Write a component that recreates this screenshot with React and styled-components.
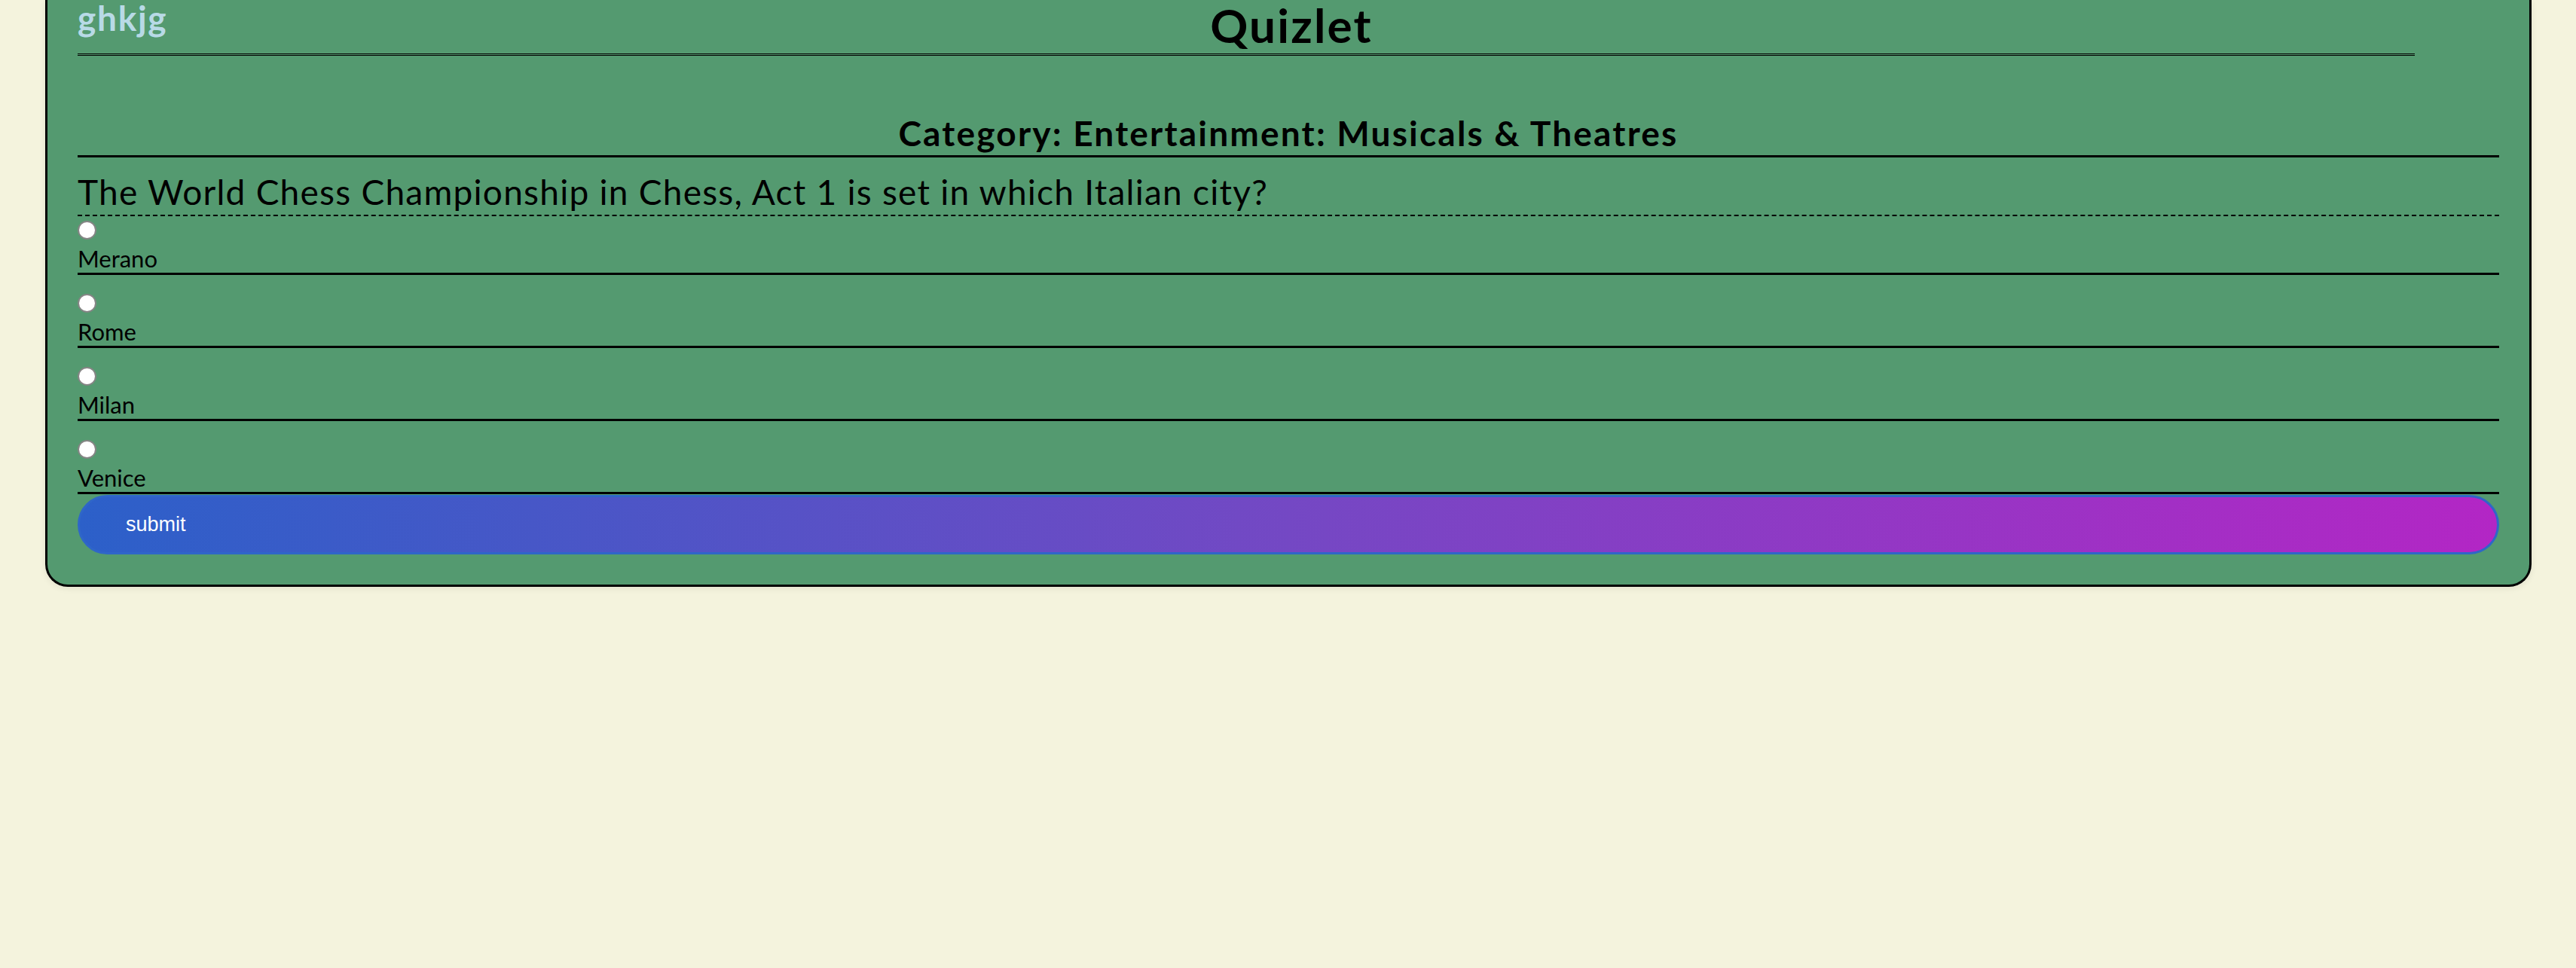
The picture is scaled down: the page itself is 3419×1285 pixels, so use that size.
import React from "react";
import styled, { createGlobalStyle } from "styled-components";

const GlobalStyle = createGlobalStyle`
  html, body {
    margin: 0;
    padding: 0;
    background: #f4f3dd;
  }
  body {
    font-family: Lato, "Open Sans", sans-serif;
    color: #000;
  }
  * { box-sizing: border-box; }
`;

const Page = styled.div`
  min-height: 1285px;
  background: #f4f3dd;
  padding: 0 59px 0 60px;
`;

const Card = styled.main`
  background: #549a70;
  border: 3px solid #000;
  border-top: none;
  border-radius: 0 0 30px 30px;
  padding: 0 40px 40px;
  box-shadow: 0 2px 8px rgba(0, 0, 0, 0.08);
  display: flex;
  flex-direction: column;
`;

const TopBar = styled.header`
  display: grid;
  grid-template-columns: 1fr auto 1fr;
  align-items: start;
`;

const Brand = styled.div`
  font-size: 46px;
  font-weight: 700;
  line-height: 48px;
  letter-spacing: 1.7px;
  color: #b8dae6;
`;

const Title = styled.h1`
  margin: 0;
  padding-left: 8px;
  font-size: 62px;
  font-weight: 700;
  line-height: 66px;
  letter-spacing: 2.2px;
  text-align: center;
`;

const DoubleRule = styled.div`
  margin: 5px 112px 0 0;
  border-top: 3px double #000;
`;

const Category = styled.h2`
  margin: 76px 0 0;
  font-size: 46px;
  font-weight: 700;
  line-height: 54px;
  letter-spacing: 2.2px;
  padding-bottom: 2px;
  text-align: center;
  border-bottom: 3px solid #000;
`;

const Question = styled.h3`
  margin: 19px 0 0;
  font-size: 46px;
  font-weight: 400;
  line-height: 54px;
  letter-spacing: 1.25px;
  padding-bottom: 3px;
  border-bottom: 2px dashed #000;
`;

const Options = styled.div`
  display: flex;
  flex-direction: column;
  gap: 19px;
`;

const Option = styled.label`
  display: flex;
  flex-direction: column;
  align-items: flex-start;
  padding: 6px 0 1px;
  border-bottom: 3px solid #000;
  cursor: pointer;
`;

const Radio = styled.input.attrs({ type: "radio" })`
  appearance: none;
  margin: 0;
  width: 25px;
  height: 25px;
  border-radius: 50%;
  background: #fff;
  border: 2px solid #858585;
`;

const OptionText = styled.span`
  margin-top: 7px;
  font-size: 31px;
  line-height: 36px;
`;

const SubmitButton = styled.button`
  margin-top: 1px;
  width: 100%;
  height: 79px;
  border: 3px solid #2f66c8;
  border-radius: 40px;
  background: linear-gradient(90deg, #2c60c9 0%, #7448c4 50%, #b326c5 100%);
  color: #fff;
  font-family: "Liberation Sans", Arial, sans-serif;
  font-size: 27px;
  text-align: left;
  padding: 0 0 0 61px;
  cursor: pointer;
`;

const answers = ["Merano", "Rome", "Milan", "Venice"];

export default function App() {
  return (
    <>
      <GlobalStyle />
      <Page>
        <Card>
          <TopBar>
            <Brand>ghkjg</Brand>
            <Title>Quizlet</Title>
            <div />
          </TopBar>
          <DoubleRule />
          <Category>Category: Entertainment: Musicals &amp; Theatres</Category>
          <Question>
            The World Chess Championship in Chess, Act 1 is set in which Italian city?
          </Question>
          <Options>
            {answers.map((a) => (
              <Option key={a}>
                <Radio name="answer" value={a} />
                <OptionText>{a}</OptionText>
              </Option>
            ))}
          </Options>
          <SubmitButton type="button">submit</SubmitButton>
        </Card>
      </Page>
    </>
  );
}
